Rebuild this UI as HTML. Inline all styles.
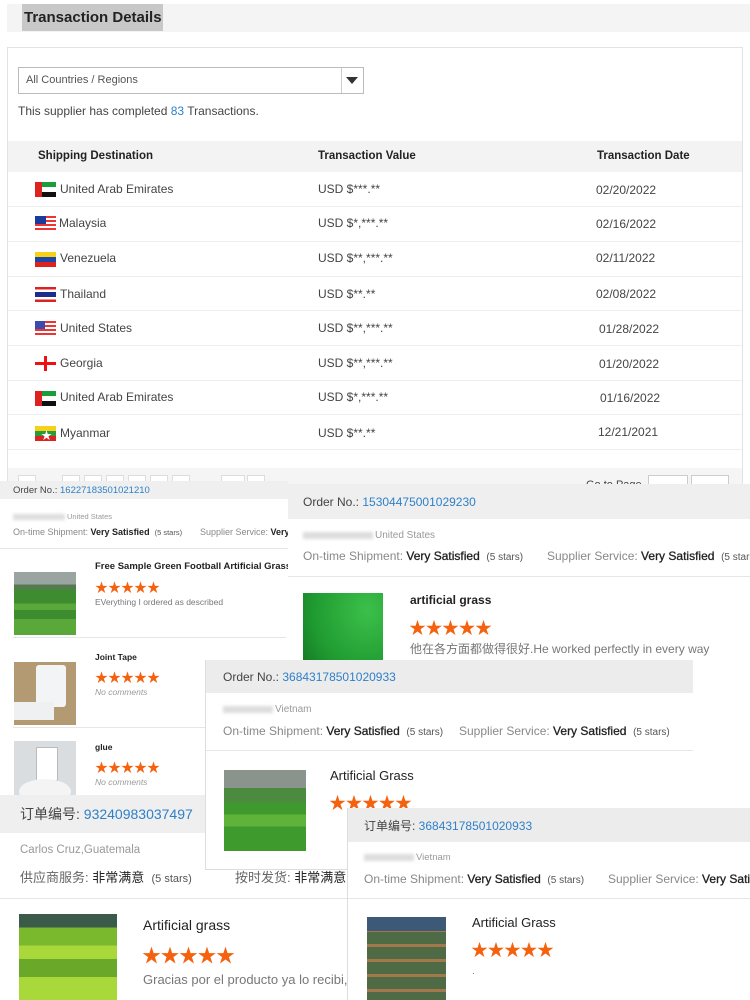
<!DOCTYPE html>
<html><head><meta charset="utf-8"><style>
*{margin:0;padding:0;box-sizing:border-box}
body{width:750px;height:1000px;position:relative;overflow:hidden;background:#fff;font-family:"Liberation Sans","Noto Sans CJK SC",sans-serif;color:#333}
.a{position:absolute}
.t{position:absolute;white-space:nowrap}
.blue{color:#2f80c8}
.g{color:#999}
.st{color:#f5620f;letter-spacing:0}
.pan{position:absolute;background:#fff;overflow:hidden}
.hd{position:absolute;left:0;right:0;top:0;background:#efefef}
.ln{position:absolute;height:1px;background:#e6e6e6}
.fl{position:absolute;left:35px;width:21px;height:15px}
.row{position:absolute;left:8px;width:734px;height:1px;background:#eee}
.blur{display:inline-block;background:#ddd;filter:blur(1.5px);height:0.7em;vertical-align:middle;margin-right:2px}
.img{position:absolute;overflow:hidden}
</style></head><body>

<div class="a" style="left:7px;top:4px;width:743px;height:28px;background:#f4f4f4"></div>
<div class="a" style="left:22px;top:4px;width:141px;height:27px;background:#c8c8c8"></div>
<div class="t" style="left:24px;top:9px;font-size:15px;font-weight:bold;color:#222">Transaction Details</div>
<div class="a" style="left:7px;top:47px;width:736px;height:440px;border:1px solid #e3e3e3;background:#fff"></div>
<div class="a" style="left:18px;top:67px;width:346px;height:27px;border:1px solid #bbb;background:#fff"></div>
<div class="a" style="left:341px;top:68px;width:1px;height:25px;background:#ccc"></div>
<div class="a" style="left:346px;top:77px;width:0;height:0;border-left:6px solid transparent;border-right:6px solid transparent;border-top:7px solid #333"></div>
<div class="t" style="left:26px;top:74px;font-size:11px;color:#555">All Countries / Regions</div>
<div class="t" style="left:18px;top:104px;font-size:12px;color:#444">This supplier has completed <span class="blue">83</span> Transactions.</div>
<div class="a" style="left:8px;top:141px;width:734px;height:31px;background:#f3f3f3"></div>
<div class="t" style="left:38px;top:150px;font-size:11.5px;font-weight:bold;color:#222">Shipping Destination</div>
<div class="t" style="left:318px;top:150px;font-size:11.5px;font-weight:bold;color:#222">Transaction Value</div>
<div class="t" style="left:597px;top:150px;font-size:11.5px;font-weight:bold;color:#222">Transaction Date</div>

<div class="row" style="top:206px"></div><div class="row" style="top:241px"></div><div class="row" style="top:276px"></div><div class="row" style="top:310px"></div><div class="row" style="top:345px"></div><div class="row" style="top:380px"></div><div class="row" style="top:414px"></div><div class="row" style="top:449px"></div>

<div class="fl" style="top:182px;background:linear-gradient(#1a9e3a 33%,#fff 33% 66%,#111 66%)"><div class="a" style="left:0;top:0;width:7px;height:15px;background:#d22"></div></div>
<div class="fl" style="top:216px;background:repeating-linear-gradient(#e33 0 2px,#fff 2px 4px)"><div class="a" style="left:0;top:0;width:11px;height:8px;background:#1b3a9a"></div></div>
<div class="fl" style="top:252px;background:linear-gradient(#f7d117 33%,#1b48a8 33% 66%,#d22 66%)"></div>
<div class="fl" style="top:287px;background:linear-gradient(#d22 17%,#fff 17% 33%,#1b2f8a 33% 66%,#fff 66% 83%,#d22 83%)"></div>
<div class="fl" style="top:321px;background:repeating-linear-gradient(#e33 0 2px,#fff 2px 4px)"><div class="a" style="left:0;top:0;width:10px;height:8px;background:#3b4bb0"></div></div>
<div class="fl" style="top:356px;background:#fff"><div class="a" style="left:9px;top:0;width:3px;height:15px;background:#e11"></div><div class="a" style="left:0;top:6px;width:21px;height:3px;background:#e11"></div></div>
<div class="fl" style="top:391px;background:linear-gradient(#1a9e3a 33%,#fff 33% 66%,#111 66%)"><div class="a" style="left:0;top:0;width:7px;height:15px;background:#d22"></div></div>
<div class="fl" style="top:426px;background:linear-gradient(#f7d117 33%,#2a9a3a 33% 66%,#d22 66%)"><div class="t" style="left:6px;top:1px;font-size:11px;color:#fff">★</div></div>

<div class="t" style="left:60px;top:182px;font-size:12px;color:#444">United Arab Emirates</div>
<div class="t" style="left:59px;top:216px;font-size:12px;color:#444">Malaysia</div>
<div class="t" style="left:60px;top:251px;font-size:12px;color:#444">Venezuela</div>
<div class="t" style="left:60px;top:287px;font-size:12px;color:#444">Thailand</div>
<div class="t" style="left:60px;top:321px;font-size:12px;color:#444">United States</div>
<div class="t" style="left:60px;top:356px;font-size:12px;color:#444">Georgia</div>
<div class="t" style="left:60px;top:390px;font-size:12px;color:#444">United Arab Emirates</div>
<div class="t" style="left:60px;top:426px;font-size:12px;color:#444">Myanmar</div>

<div class="t" style="left:318px;top:182px;font-size:12px;color:#444">USD $***.**</div>
<div class="t" style="left:318px;top:216px;font-size:12px;color:#444">USD $*,***.**</div>
<div class="t" style="left:318px;top:251px;font-size:12px;color:#444">USD $**,***.**</div>
<div class="t" style="left:318px;top:287px;font-size:12px;color:#444">USD $**.**</div>
<div class="t" style="left:318px;top:321px;font-size:12px;color:#444">USD $**,***.**</div>
<div class="t" style="left:318px;top:356px;font-size:12px;color:#444">USD $**,***.**</div>
<div class="t" style="left:318px;top:390px;font-size:12px;color:#444">USD $*,***.**</div>
<div class="t" style="left:318px;top:426px;font-size:12px;color:#444">USD $**.**</div>

<div class="t" style="left:596px;top:183px;font-size:12px;color:#444">02/20/2022</div>
<div class="t" style="left:596px;top:217px;font-size:12px;color:#444">02/16/2022</div>
<div class="t" style="left:596px;top:251px;font-size:12px;color:#444">02/11/2022</div>
<div class="t" style="left:596px;top:287px;font-size:12px;color:#444">02/08/2022</div>
<div class="t" style="left:599px;top:322px;font-size:12px;color:#444">01/28/2022</div>
<div class="t" style="left:599px;top:357px;font-size:12px;color:#444">01/20/2022</div>
<div class="t" style="left:600px;top:391px;font-size:12px;color:#444">01/16/2022</div>
<div class="t" style="left:598px;top:425px;font-size:12px;color:#444">12/21/2021</div>

<div class="a" style="left:8px;top:468px;width:734px;height:19px;background:#f5f5f5"></div>
<div class="a" style="left:18px;top:475px;width:18px;height:14px;border:1px solid #ddd;background:#fff"></div>
<div class="a" style="left:62px;top:475px;width:18px;height:14px;border:1px solid #ddd;background:#fff"></div>
<div class="a" style="left:84px;top:475px;width:18px;height:14px;border:1px solid #ddd;background:#fff"></div>
<div class="a" style="left:106px;top:475px;width:18px;height:14px;border:1px solid #ddd;background:#fff"></div>
<div class="a" style="left:128px;top:475px;width:18px;height:14px;border:1px solid #ddd;background:#fff"></div>
<div class="a" style="left:150px;top:475px;width:18px;height:14px;border:1px solid #ddd;background:#fff"></div>
<div class="a" style="left:172px;top:475px;width:18px;height:14px;border:1px solid #ddd;background:#fff"></div>
<div class="a" style="left:221px;top:475px;width:24px;height:14px;border:1px solid #ddd;background:#fff"></div>
<div class="a" style="left:247px;top:475px;width:18px;height:14px;border:1px solid #ddd;background:#fff"></div>
<div class="t" style="left:586px;top:479px;font-size:11px;color:#444">Go to Page</div>
<div class="a" style="left:648px;top:475px;width:40px;height:14px;border:1px solid #ccc;background:#fff"></div>
<div class="a" style="left:691px;top:475px;width:38px;height:14px;border:1px solid #ccc;background:#fff"></div>

<div class="pan" style="left:0;top:481px;width:288px;height:320px">
 <div class="hd" style="height:18px"></div>
 <div class="t" style="left:13px;top:4px;font-size:9.5px;color:#444">Order No.: <span class="blue">16227183501021210</span></div>
 <div class="t" style="left:13px;top:31px;font-size:7.5px" ><span class="blur" style="width:52px"></span><span class="g">United States</span></div>
 <div class="t" style="left:13px;top:46px;font-size:9px;color:#888">On-time Shipment: <b style="color:#222">Very Satisfied</b> &nbsp;<span style="font-size:7.5px;color:#555">(5 stars)</span></div>
 <div class="t" style="left:200px;top:46px;font-size:9px;color:#888">Supplier Service: <b style="color:#222">Very</b></div>
 <div class="ln" style="left:0;right:0;top:67px"></div>
 <div class="img" style="left:14px;top:91px;width:62px;height:63px;background:linear-gradient(#9aa4a0 0 20%,#567a50 20% 28%,#3d8d30 28% 50%,#5aa83a 50% 60%,#3d8d30 60% 75%,#5aa83a 75%)"></div>
 <div class="t" style="left:95px;top:80px;font-size:9.5px;font-weight:bold;color:#222">Free Sample Green Football Artificial Grass</div>
 <div class="t st" style="left:95px;top:96px;font-size:13px">★★★★★</div>
 <div class="t" style="left:95px;top:116px;font-size:8.5px;color:#777">EVerything I ordered as described</div>
 <div class="ln" style="left:13px;width:273px;top:156px"></div>
 <div class="img" style="left:14px;top:181px;width:62px;height:63px;background:#b39a73"><div class="a" style="left:22px;top:3px;width:30px;height:42px;background:#f2f4f6;border-radius:3px"></div><div class="a" style="left:0;top:40px;width:40px;height:18px;background:#eef0f2"></div></div>
 <div class="t" style="left:95px;top:171px;font-size:8.5px;font-weight:bold;color:#222">Joint Tape</div>
 <div class="t st" style="left:95px;top:186px;font-size:13px">★★★★★</div>
 <div class="t" style="left:95px;top:206px;font-size:8.5px;color:#999;font-style:italic">No comments</div>
 <div class="ln" style="left:13px;width:273px;top:246px"></div>
 <div class="img" style="left:14px;top:260px;width:62px;height:63px;background:#d9dde0"><div class="a" style="left:22px;top:6px;width:22px;height:34px;background:#fff;border:1px solid #bbb"></div><div class="a" style="left:5px;top:38px;width:52px;height:25px;background:#f4f4f4;border-radius:50%"></div></div>
 <div class="t" style="left:95px;top:261px;font-size:8.5px;font-weight:bold;color:#222">glue</div>
 <div class="t st" style="left:95px;top:276px;font-size:13px">★★★★★</div>
 <div class="t" style="left:95px;top:296px;font-size:8.5px;color:#999;font-style:italic">No comments</div>
</div>

<div class="pan" style="left:288px;top:484px;width:462px;height:330px">
 <div class="hd" style="height:35px"></div>
 <div class="t" style="left:15px;top:11px;font-size:12px;color:#444">Order No.: <span class="blue">15304475001029230</span></div>
 <div class="t" style="left:15px;top:46px;font-size:10px"><span class="blur" style="width:70px"></span><span class="g">United States</span></div>
 <div class="t" style="left:15px;top:65px;font-size:12px;color:#888">On-time Shipment: <b style="color:#222;font-weight:normal;-webkit-text-stroke:0.3px #222">Very Satisfied</b> &nbsp;<span style="font-size:10px;color:#555">(5 stars)</span></div>
 <div class="t" style="left:259px;top:65px;font-size:12px;color:#888">Supplier Service: <b style="color:#222;font-weight:normal;-webkit-text-stroke:0.3px #222">Very Satisfied</b> &nbsp;<span style="font-size:10px;color:#555">(5 stars)</span></div>
 <div class="ln" style="left:0;right:0;top:92px"></div>
 <div class="img" style="left:15px;top:109px;width:80px;height:90px;background:radial-gradient(ellipse at 80% 20%,#3cc04a,#1f9a30 60%,#136a20)"></div>
 <div class="t" style="left:122px;top:109px;font-size:12px;font-weight:bold;color:#222">artificial grass</div>
 <div class="t st" style="left:121px;top:130px;font-size:17px;letter-spacing:-0.5px">★★★★★</div>
 <div class="t" style="left:122px;top:156px;font-size:12px;color:#777">他在各方面都做得很好.He worked perfectly in every way</div>
</div>

<div class="pan" style="left:0;top:795px;width:350px;height:205px">
 <div class="hd" style="height:38px"></div>
 <div class="t" style="left:20px;top:9px;font-size:14px;color:#444">订单编号: <span class="blue">93240983037497</span></div>
 <div class="t" style="left:20px;top:49px;font-size:11.5px;color:#999">Carlos Cruz,Guatemala</div>
 <div class="t" style="left:20px;top:72px;font-size:13px;color:#666">供应商服务: <span style="color:#222">非常满意</span> &nbsp;<span style="font-size:11px;color:#555">(5 stars)</span></div>
 <div class="t" style="left:235px;top:72px;font-size:13px;color:#666">按时发货: <span style="color:#222">非常满意</span></div>
 <div class="ln" style="left:0;right:0;top:103px"></div>
 <div class="img" style="left:19px;top:119px;width:98px;height:90px;background:linear-gradient(#3a5a4a 0 15%,#7ab82e 15% 35%,#a8d83a 35% 50%,#6aa82a 50% 70%,#a8d83a 70%)"></div>
 <div class="t" style="left:143px;top:122px;font-size:14px;color:#222">Artificial grass</div>
 <div class="t st" style="left:142px;top:146px;font-size:19px;letter-spacing:-0.5px">★★★★★</div>
 <div class="t" style="left:143px;top:177px;font-size:13px;color:#777">Gracias por el producto ya lo recibi,</div>
</div>

<div class="pan" style="left:205px;top:660px;width:488px;height:210px;border-left:1px solid #ddd;border-bottom:1px solid #ddd">
 <div class="hd" style="height:33px;background:#ececec"></div>
 <div class="t" style="left:17px;top:10px;font-size:12px;color:#444">Order No.: <span class="blue">36843178501020933</span></div>
 <div class="t" style="left:17px;top:44px;font-size:10px"><span class="blur" style="width:50px"></span><span class="g">Vietnam</span></div>
 <div class="t" style="left:17px;top:64px;font-size:12px;color:#888">On-time Shipment: <b style="color:#222;font-weight:normal;-webkit-text-stroke:0.3px #222">Very Satisfied</b> &nbsp;<span style="font-size:10px;color:#555">(5 stars)</span></div>
 <div class="t" style="left:253px;top:64px;font-size:12px;color:#888">Supplier Service: <b style="color:#222;font-weight:normal;-webkit-text-stroke:0.3px #222">Very Satisfied</b> &nbsp;<span style="font-size:10px;color:#555">(5 stars)</span></div>
 <div class="ln" style="left:0;right:0;top:90px"></div>
 <div class="img" style="left:18px;top:110px;width:82px;height:81px;background:linear-gradient(#8a948c 0 22%,#4c8a40 22% 40%,#3f9a2e 40% 55%,#5fb23a 55% 70%,#3f9a2e 70%)"></div>
 <div class="t" style="left:124px;top:108px;font-size:13px;color:#222">Artificial Grass</div>
 <div class="t st" style="left:123px;top:129px;font-size:17px;letter-spacing:-0.5px">★★★★★</div>
</div>

<div class="pan" style="left:347px;top:808px;width:403px;height:192px;border-left:1px solid #ddd">
 <div class="hd" style="height:34px;background:#ececec"></div>
 <div class="t" style="left:16px;top:9px;font-size:12px;color:#444">订单编号: <span class="blue">36843178501020933</span></div>
 <div class="t" style="left:16px;top:44px;font-size:9.5px"><span class="blur" style="width:50px"></span><span class="g">Vietnam</span></div>
 <div class="t" style="left:16px;top:64px;font-size:12px;color:#888">On-time Shipment: <b style="color:#222;font-weight:normal;-webkit-text-stroke:0.3px #222">Very Satisfied</b> &nbsp;<span style="font-size:10px;color:#555">(5 stars)</span></div>
 <div class="t" style="left:260px;top:64px;font-size:12px;color:#888">Supplier Service: <b style="color:#222;font-weight:normal;-webkit-text-stroke:0.3px #222">Very Satisfied</b></div>
 <div class="ln" style="left:0;right:0;top:90px"></div>
 <div class="img" style="left:19px;top:109px;width:79px;height:85px;background:repeating-linear-gradient(#4f6b45 0 12px,#a3784a 12px 15px)"><div class="a" style="left:0;top:0;width:79px;height:14px;background:#3c5a78"></div></div>
 <div class="t" style="left:124px;top:107px;font-size:13px;color:#222">Artificial Grass</div>
 <div class="t st" style="left:123px;top:128px;font-size:17px;letter-spacing:-0.5px">★★★★★</div>
 <div class="t" style="left:124px;top:158px;font-size:10px;color:#777">.</div>
</div>

</body></html>
